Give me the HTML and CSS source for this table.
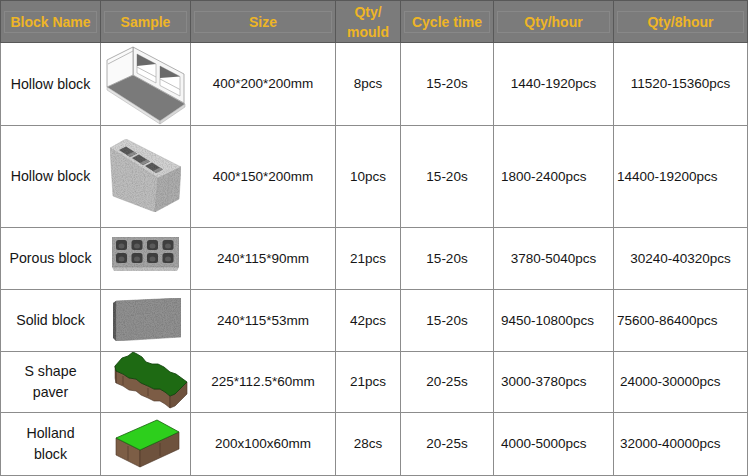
FILE: index.html
```html
<!DOCTYPE html>
<html>
<head>
<meta charset="utf-8">
<link rel="stylesheet" href="styles.css">
</head>
<body>
<div class="sheet">
  <div class="head">
    <div class="hc"><span class="hb">Block Name</span></div>
    <div class="hc"><span class="hb">Sample</span></div>
    <div class="hc"><span class="hb">Size</span></div>
    <div class="hc plain"><span class="hb">Qty/<br>mould</span></div>
    <div class="hc"><span class="hb">Cycle time</span></div>
    <div class="hc"><span class="hb">Qty/hour</span></div>
    <div class="hc"><span class="hb">Qty/8hour</span></div>
  </div>
  <div class="body">
    <!-- row 1 -->
    <div class="cell name">Hollow block</div>
    <div class="cell pic">
      <svg width="89" height="82" viewBox="101 43 89 82">
        <defs>
          <filter id="grain" x="0" y="0" width="1" height="1">
            <feTurbulence type="fractalNoise" baseFrequency="0.9" numOctaves="2" seed="4" result="noise"/>
            <feColorMatrix in="noise" type="matrix" values="0 0 0 0 0  0 0 0 0 0  0 0 0 0 0  0.6 0 0 0 -0.22" result="dark"/>
            <feComposite in="dark" in2="SourceGraphic" operator="in" result="speck"/>
            <feMerge><feMergeNode in="SourceGraphic"/><feMergeNode in="speck"/></feMerge>
          </filter>
        </defs>
        <polygon points="107,87 133,75 185,104 160,121" fill="#7a7a7a" stroke="#9a9a9a" stroke-width="0.6"/>
        <polygon points="107,87 160,121 160,124 107,90" fill="#e4e4e4" stroke="#aaa" stroke-width="0.5"/>
        <polygon points="160,121 185,104 185,107 160,124" fill="#d8d8d8" stroke="#aaa" stroke-width="0.5"/>
        <polygon points="133,47 184,74 184,103 133,75" fill="#f6f6f6" stroke="#9c9c9c" stroke-width="0.8"/>
        <polygon points="137,54 156,64 156,83 137,73" fill="#fff" stroke="#a0a0a0" stroke-width="0.6"/>
        <polygon points="137,54 156,64 137,66" fill="#6a6a6a"/>
        <line x1="137" y1="67" x2="156" y2="77" stroke="#b0b0b0" stroke-width="0.8"/>
        <polygon points="160,66 180,76.5 180,96 160,85.5" fill="#fff" stroke="#a0a0a0" stroke-width="0.6"/>
        <polygon points="160,66 180,76.5 160,78" fill="#6a6a6a"/>
        <line x1="160" y1="79" x2="180" y2="89.5" stroke="#b0b0b0" stroke-width="0.8"/>
        <polygon points="107,60 133,47 133,75 107,87" fill="#fafafa" stroke="#9a9a9a" stroke-width="0.8"/>
        <line x1="108" y1="64" x2="133" y2="51" stroke="#a8a8a8" stroke-width="0.8"/>
      </svg>
    </div>
    <div class="cell">400*200*200mm</div>
    <div class="cell">8pcs</div>
    <div class="cell">15-20s</div>
    <div class="cell">1440-1920pcs</div>
    <div class="cell">11520-15360pcs</div>

    <!-- row 2 -->
    <div class="cell name">Hollow block</div>
    <div class="cell pic">
      <svg width="89" height="101" viewBox="101 126 89 101">
        <g filter="url(#grain)">
          <polygon points="110,148 126,139 181,167 158,178" fill="#d2d2d2" stroke="#b8b8b8" stroke-width="0.5"/>
          <polygon points="110,148 158,178 155,212 113,196" fill="#bdbdbd" stroke="#a8a8a8" stroke-width="0.5"/>
          <polygon points="158,178 181,167 179,199 155,212" fill="#adadad" stroke="#9e9e9e" stroke-width="0.5"/>
          <polygon points="119,150 126,146.5 137,153.4 130,156.9" fill="#5c5c5c"/>
          <polygon points="132,158 139,154.5 150,161.4 143,164.9" fill="#5c5c5c"/>
          <polygon points="145,166 152,162.5 163,169.4 156,172.9" fill="#5c5c5c"/>
          <polygon points="130,156.9 137,153.4 134,151.6 127,155.1" fill="#8e8e8e"/>
          <polygon points="143,164.9 150,161.4 147,159.6 140,163.1" fill="#8e8e8e"/>
          <polygon points="156,172.9 163,169.4 160,167.6 153,171.1" fill="#8e8e8e"/>
        </g>
        <line x1="169" y1="174" x2="167" y2="206" stroke="#999" stroke-width="0.5"/>
      </svg>
    </div>
    <div class="cell">400*150*200mm</div>
    <div class="cell">10pcs</div>
    <div class="cell">15-20s</div>
    <div class="cell lft">1800-2400pcs</div>
    <div class="cell lft-s">14400-19200pcs</div>

    <!-- row 3 -->
    <div class="cell name">Porous block</div>
    <div class="cell pic">
      <svg width="89" height="61" viewBox="101 228 89 61">
        <g filter="url(#grain)">
          <polygon points="112,267 179,267 177,271 114,271" fill="#c2c2c2"/>
          <rect x="112" y="237" width="67" height="30" fill="#a4a4a4" stroke="#8a8a8a" stroke-width="0.5"/>
        </g>
        <g fill="#3e3e3e">
          <rect x="116" y="240" width="11" height="10" rx="2.5"/>
          <rect x="131.5" y="240" width="11" height="10" rx="2.5"/>
          <rect x="147" y="240" width="11" height="10" rx="2.5"/>
          <rect x="162.5" y="240" width="11" height="10" rx="2.5"/>
          <rect x="116" y="253" width="11" height="10" rx="2.5"/>
          <rect x="131.5" y="253" width="11" height="10" rx="2.5"/>
          <rect x="147" y="253" width="11" height="10" rx="2.5"/>
          <rect x="162.5" y="253" width="11" height="10" rx="2.5"/>
        </g>
        <g fill="#5a5a5a">
          <ellipse cx="121.5" cy="246" rx="3" ry="2.5"/>
          <ellipse cx="137" cy="246" rx="3" ry="2.5"/>
          <ellipse cx="152.5" cy="246" rx="3" ry="2.5"/>
          <ellipse cx="168" cy="246" rx="3" ry="2.5"/>
          <ellipse cx="121.5" cy="259" rx="3" ry="2.5"/>
          <ellipse cx="137" cy="259" rx="3" ry="2.5"/>
          <ellipse cx="152.5" cy="259" rx="3" ry="2.5"/>
          <ellipse cx="168" cy="259" rx="3" ry="2.5"/>
        </g>
      </svg>
    </div>
    <div class="cell">240*115*90mm</div>
    <div class="cell">21pcs</div>
    <div class="cell">15-20s</div>
    <div class="cell">3780-5040pcs</div>
    <div class="cell">30240-40320pcs</div>

    <!-- row 4 -->
    <div class="cell name">Solid block</div>
    <div class="cell pic">
      <svg width="89" height="61" viewBox="101 290 89 61">
        <g filter="url(#grain)">
          <polygon points="113,303 116,301 181,298 178,299" fill="#b0b0b0"/>
          <polygon points="116,301 181,298 181,337 116,341" fill="#909090" stroke="#808080" stroke-width="0.5"/>
          <polygon points="113,303 116,301 116,341 113,338" fill="#5c5c5c"/>
        </g>
      </svg>
    </div>
    <div class="cell">240*115*53mm</div>
    <div class="cell">42pcs</div>
    <div class="cell">15-20s</div>
    <div class="cell lft">9450-10800pcs</div>
    <div class="cell lft-s">75600-86400pcs</div>

    <!-- row 5 -->
    <div class="cell name">S shape<br>paver</div>
    <div class="cell pic">
      <svg width="89" height="60" viewBox="101 352 89 60">
        <polygon points="116,371 123,374 129,378 136,379 141,383 148,386 154,389 160,389 165,392 170,396 170,408 165,404 160,401 154,401 148,398 141,395 136,391 129,390 123,386 116,383" fill="#7c5c45" stroke="#4a3426" stroke-width="0.6"/>
        <polygon points="170,396 175,394 180,389 187,382 187,394 180,401 175,406 170,408" fill="#6f523d" stroke="#4a3426" stroke-width="0.6"/>
        <polygon points="115,366 116,371 116,383 115,378" fill="#6f523d" stroke="#4a3426" stroke-width="0.5"/>
        <g stroke="#4a3426" stroke-width="0.6">
          <line x1="123" y1="376" x2="123" y2="385"/>
          <line x1="148" y1="388" x2="148" y2="396"/>
        </g>
        <polygon points="115,366 122,358 128,356 133,352 137,354 142,357 146,362 152,364 158,364 164,367 170,372 176,374 187,382 180,389 175,394 170,396 165,392 160,389 154,389 148,386 141,383 136,379 129,378 123,374 116,371" fill="#1e6a13" stroke="#0d3f07" stroke-width="0.8"/>
      </svg>
    </div>
    <div class="cell">225*112.5*60mm</div>
    <div class="cell">21pcs</div>
    <div class="cell">20-25s</div>
    <div class="cell lft">3000-3780pcs</div>
    <div class="cell lft-m">24000-30000pcs</div>

    <!-- row 6 -->
    <div class="cell name">Holland<br>block</div>
    <div class="cell pic">
      <svg width="89" height="62" viewBox="101 413 89 62">
        <polygon points="116,438 140,450 140,467 116,455" fill="#7d5e46" stroke="#4a3426" stroke-width="0.6"/>
        <polygon points="140,450 179,432 179,449 140,467" fill="#6e523d" stroke="#4a3426" stroke-width="0.6"/>
        <g stroke="#4a3426" stroke-width="0.6">
          <line x1="128" y1="446" x2="128" y2="460"/>
          <line x1="160" y1="443" x2="160" y2="456"/>
        </g>
        <polygon points="116,438 157,420 179,432 140,450" fill="#2dcf1c" stroke="#16600d" stroke-width="0.8"/>
      </svg>
    </div>
    <div class="cell">200x100x60mm</div>
    <div class="cell">28cs</div>
    <div class="cell">20-25s</div>
    <div class="cell lft">4000-5000pcs</div>
    <div class="cell lft-m">32000-40000pcs</div>
  </div>
</div>
</body>
</html>
```
FILE: styles.css
```css
html, body {
  margin: 0;
  padding: 0;
  background: #ffffff;
}

body {
  font-family: "Liberation Sans", Arial, sans-serif;
}

.sheet {
  width: 748px;
}

.head,
.body {
  display: grid;
  grid-template-columns: 99px 89px 144px 64px 92px 119px 133px;
  column-gap: 1px;
  row-gap: 1px;
}

.head {
  grid-template-rows: 41px;
  padding: 1px;
  background: #585858;
}

.body {
  grid-template-rows: 82px 101px 61px 61px 60px 62px;
  padding: 0 1px 1px;
  background: #8c8c8c;
}

.hc {
  background: #7b7b7b;
  display: flex;
  align-items: center;
  padding: 0 3px;
}

.hb {
  flex: 1;
  height: 20px;
  line-height: 20px;
  border: 1px solid #888888;
  color: #eeb526;
  font-weight: bold;
  font-size: 14px;
  text-align: center;
  white-space: nowrap;
}

.hc.plain .hb {
  border: none;
  height: auto;
}

.cell {
  background: #ffffff;
  display: flex;
  align-items: center;
  justify-content: center;
  text-align: center;
  font-size: 13.5px;
  line-height: 20px;
  color: #151515;
  white-space: nowrap;
}

.cell.name {
  font-size: 14.2px;
  line-height: 21px;
}

.cell.pic {
  padding: 0;
}

.cell.pic svg {
  display: block;
}

.cell.lft {
  justify-content: flex-start;
  padding-left: 7px;
}

.cell.lft-s {
  justify-content: flex-start;
  padding-left: 3px;
}

.cell.lft-m {
  justify-content: flex-start;
  padding-left: 6px;
}
```
